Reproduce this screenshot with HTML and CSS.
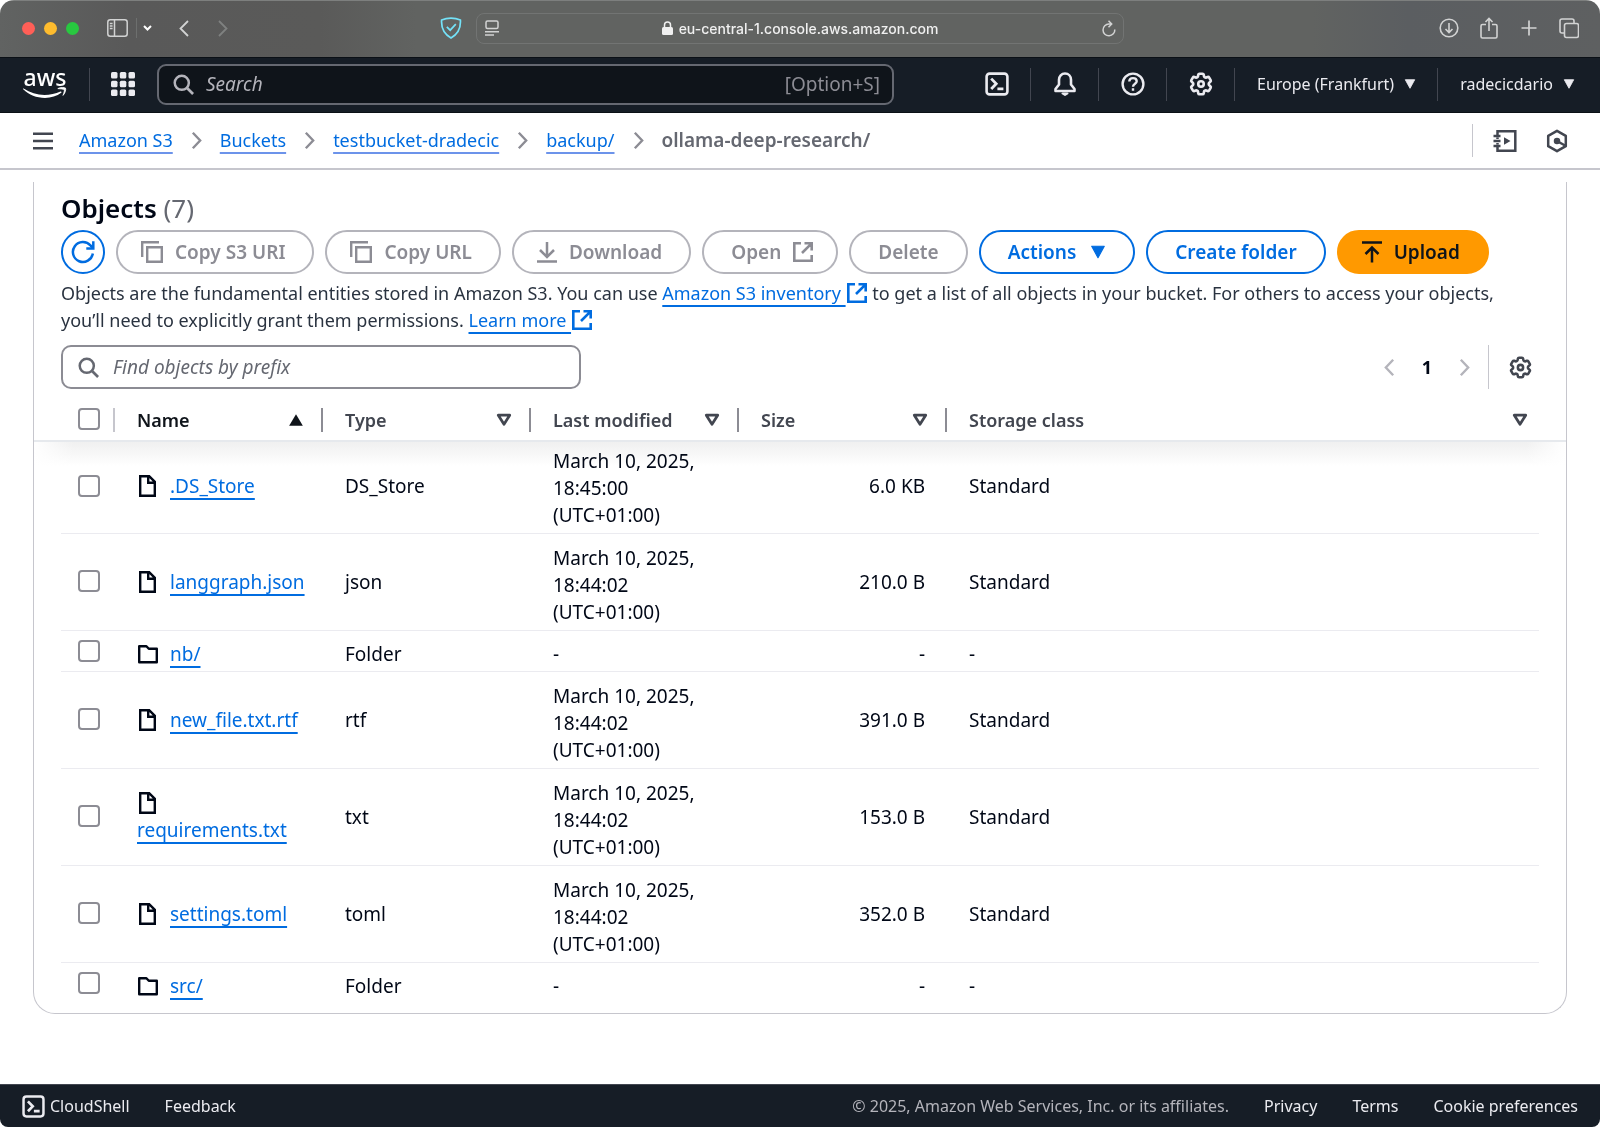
FILE: index.html
```
<!DOCTYPE html>
<html lang="en">
<head>
  <meta charset="UTF-8">
  <meta name="viewport" content="width=device-width, initial-scale=1.0">
  <title>ollama-deep-research/ - S3 bucket</title>
  <link rel="stylesheet" href="styles.css">
</head>
<body>

  <!-- shared icons -->
  <svg class="sprite" aria-hidden="true">
    <symbol id="i-file" viewBox="0 0 22 22">
      <path d="M3.2 1.2h9l5.6 5.6v14H3.2z M11.2 1.5v6.3h6.3" fill="none" stroke="currentColor" stroke-width="2.4"/>
    </symbol>
    <symbol id="i-folder" viewBox="0 0 22 22">
      <path d="M2.2 3.2h7.2l2.4 2.6h8v13.4H2.2z" fill="none" stroke="currentColor" stroke-width="2.4" stroke-linejoin="round"/>
    </symbol>
    <symbol id="i-gear" viewBox="1.5 1.5 21 21">
      <g fill="none" stroke="currentColor" stroke-width="2.3">
        <path d="M9.594 3.94c.09-.542.56-.94 1.11-.94h2.593c.55 0 1.02.398 1.11.94l.213 1.281c.063.374.313.686.645.87.074.04.147.083.22.127.325.196.72.257 1.075.124l1.217-.456a1.125 1.125 0 0 1 1.37.49l1.296 2.247a1.125 1.125 0 0 1-.26 1.431l-1.003.827c-.293.241-.438.613-.43.992a7.723 7.723 0 0 1 0 .255c-.008.378.137.75.43.991l1.004.827c.424.35.534.955.26 1.43l-1.298 2.247a1.125 1.125 0 0 1-1.369.491l-1.217-.456c-.355-.133-.75-.072-1.076.124a6.47 6.47 0 0 1-.22.128c-.331.183-.581.495-.644.869l-.213 1.281c-.09.543-.56.94-1.11.94h-2.594c-.55 0-1.019-.398-1.11-.94l-.213-1.281c-.062-.374-.312-.686-.644-.87a6.52 6.52 0 0 1-.22-.127c-.325-.196-.72-.257-1.076-.124l-1.217.456a1.125 1.125 0 0 1-1.369-.49l-1.297-2.247a1.125 1.125 0 0 1 .26-1.431l1.004-.827c.292-.24.437-.613.43-.991a6.932 6.932 0 0 1 0-.255c.007-.38-.138-.751-.43-.992l-1.004-.827a1.125 1.125 0 0 1-.26-1.43l1.297-2.247a1.125 1.125 0 0 1 1.37-.491l1.216.456c.356.133.751.072 1.076-.124.072-.044.146-.086.22-.128.332-.183.582-.495.644-.869l.214-1.28Z"/>
        <circle cx="12" cy="12" r="2.4"/>
      </g>
    </symbol>
    <symbol id="i-search" viewBox="0 0 22 22">
      <path d="M15 15l6 6" fill="none" stroke="currentColor" stroke-width="2.8"/>
      <circle cx="9.2" cy="9.2" r="7.4" fill="none" stroke="currentColor" stroke-width="2.6"/>
    </symbol>
    <symbol id="i-external" viewBox="0 0 22 22">
      <path d="M9 2.3H2.3v17.4h17.4V14 M12.5 2.3h7.2v7.2 M19.4 2.6L10 12" fill="none" stroke="currentColor" stroke-width="2.6"/>
    </symbol>
    <symbol id="i-copy" viewBox="0 0 24 24">
      <path d="M2.2 17V2.2H19 M7.2 7.2h14.6v14.6H7.2z" fill="none" stroke="currentColor" stroke-width="2.4"/>
    </symbol>
    <symbol id="i-shell" viewBox="0 0 24 24">
      <rect x="1.6" y="1.6" width="20.8" height="20.8" rx="3" fill="none" stroke="currentColor" stroke-width="2.6"/>
      <path d="M6.2 6.6l5 5.2-5 5.2 M12.4 16.8h6" fill="none" stroke="currentColor" stroke-width="2.8"/>
    </symbol>
    <symbol id="i-sort" viewBox="0 0 14 14">
      <path d="M2 2.8h10L7 10.8z" fill="none" stroke="currentColor" stroke-width="2.4" stroke-linejoin="round"/>
    </symbol>
    <symbol id="i-caret" viewBox="0 0 14 14">
      <path d="M1.5 2h11L7 12z" fill="currentColor" stroke="currentColor" stroke-linejoin="round"/>
    </symbol>
    <symbol id="i-chevron" viewBox="0 0 12 20">
      <path d="M2 1.5l8 8.5-8 8.5" fill="none" stroke="currentColor" stroke-width="2.6"/>
    </symbol>
  </svg>

  <div class="window">

    <div class="toolbar">
      <div class="lights"><i class="red"></i><i class="yellow"></i><i class="green"></i></div>
      <button class="tool sidebar-toggle" aria-label="Sidebar">
        <svg width="21" height="18" viewBox="0 0 21 18" fill="none" stroke="currentColor" stroke-width="1.5"><rect x=".8" y=".8" width="19.4" height="16.4" rx="2.5"/><path d="M7.5 1v16M2.8 4.4h2.8M2.8 7h2.8M2.8 9.6h2.8"/></svg>
      </button>
      <button class="tool tab-menu" aria-label="Tab groups">
        <svg width="9" height="6" viewBox="0 0 9 6" fill="none" stroke="currentColor" stroke-width="2"><path d="M1 1l3.5 3.5L8 1"/></svg>
      </button>
      <button class="tool back" aria-label="Back">
        <svg width="10" height="17" viewBox="0 0 10 17" fill="none" stroke="currentColor" stroke-width="1.8"><path d="M9 1L1.5 8.5 9 16"/></svg>
      </button>
      <button class="tool forward" aria-label="Forward" disabled>
        <svg width="10" height="17" viewBox="0 0 10 17" fill="none" stroke="currentColor" stroke-width="1.8"><path d="M1 1l7.5 7.5L1 16"/></svg>
      </button>
      <div class="address-wrap">
        <svg class="shield" width="22" height="22" viewBox="0 0 22 22" fill="none" stroke="currentColor" stroke-width="1.7"><path d="M11 1.2c3.5 0 6.5.6 9.4 1.8.6 8.8-2.9 14.400-9.400 18C4.500 17.400 1 11.800 1.600 3 4.500 1.800 7.500 1.200 11 1.200z"/><path d="M6.800 9.800l3.400 3.400 5.600-6"/></svg>
        <div class="address">
          <svg width="14" height="16" viewBox="0 0 14 16" fill="none" stroke="currentColor" stroke-width="1.5"><rect x="1" y="1" width="12" height="7.5" rx="1.5"/><path d="M0 11.700h14M0 15h9"/></svg>
          <div class="url">
            <svg width="11" height="14" viewBox="0 0 11 14" fill="currentColor"><rect y="6" width="11" height="8" rx="1.5"/><path d="M2.500 6V4a3 3 0 0 1 6 0v2" fill="none" stroke="currentColor" stroke-width="1.5"/></svg>
            <span>eu-central-1.console.aws.amazon.com</span>
          </div>
          <svg width="14" height="17" viewBox="0 0 14 17" fill="none" stroke="currentColor" stroke-width="1.5"><path d="M12.800 9.500A5.900 5.900 0 1 1 7 4h2.500M6.500.8L9.700 4 6.500 7.200"/></svg>
        </div>
      </div>
      <div class="window-actions">
        <button class="tool" aria-label="Downloads"><svg width="20" height="22" viewBox="0 0 20 22" fill="none" stroke="currentColor" stroke-width="1.6"><circle cx="10" cy="11" r="8.8"/><path d="M10 6v9.500M6.500 12l3.500 3.500 3.500-3.500"/></svg></button>
        <button class="tool" aria-label="Share"><svg width="20" height="22" viewBox="0 0 20 22" fill="none" stroke="currentColor" stroke-width="1.6"><path d="M7 7.500H3.500a1.500 1.500 0 0 0-1.500 1.500v10.500A1.500 1.500 0 0 0 3.500 21h13a1.500 1.500 0 0 0 1.500-1.500V9a1.500 1.500 0 0 0-1.500-1.500H13M10 14V1.500M6.500 5L10 1.500 13.500 5"/></svg></button>
        <button class="tool" aria-label="New tab"><svg width="20" height="22" viewBox="0 0 20 22" fill="none" stroke="currentColor" stroke-width="1.7"><path d="M10 3.500v15M2.500 11h15"/></svg></button>
        <button class="tool" aria-label="Tab overview"><svg width="20" height="22" viewBox="0 0 20 22" fill="none" stroke="currentColor" stroke-width="1.6"><rect x="5.500" y="6.500" width="14" height="14" rx="2"/><path d="M5 16H3a2 2 0 0 1-2-2V4a2 2 0 0 1 2-2h10a2 2 0 0 1 2 2v2"/></svg></button>
      </div>
    </div>

    <header class="navbar">
      <a class="logo" href="#" aria-label="AWS home">
        <span>aws</span>
        <svg width="44" height="12" viewBox="0 0 44 12"><path d="M.6 1.600C7 5.800 14 8 21.500 8c5.500 0 11-1.200 16-3.400.8-.3 1.500.6.7 1.200C34 9 28 11 22 11 13.500 11 6 7.800.2 2.300c-.4-.4 0-1 .4-.7z" fill="currentColor"/><path d="M34.800 1.600c2.500-1.500 7-1.300 7.700-.5.700 1-.2 5.200-2.500 7.300 1-2.500 1.600-4.800 1.200-5.600-.5-.9-3.700-.9-6.400-1.200z" fill="currentColor" stroke="currentColor" stroke-width=".8"/></svg>
      </a>
      <button class="apps" aria-label="Services">
        <svg width="24" height="24" viewBox="0 0 24 24" fill="currentColor"><rect x="0" y="0" width="6.5" height="6.5" rx="1.5"/><rect x="8.8" y="0" width="6.5" height="6.5" rx="1.5"/><rect x="17.5" y="0" width="6.5" height="6.5" rx="1.5"/><rect x="0" y="8.8" width="6.5" height="6.5" rx="1.5"/><rect x="8.8" y="8.8" width="6.5" height="6.5" rx="1.5"/><rect x="17.5" y="8.8" width="6.5" height="6.5" rx="1.5"/><rect x="0" y="17.5" width="6.5" height="6.5" rx="1.5"/><rect x="8.8" y="17.5" width="6.5" height="6.5" rx="1.5"/><rect x="17.5" y="17.5" width="6.5" height="6.5" rx="1.5"/></svg>
      </button>
      <label class="nav-search">
        <svg width="21" height="21"><use href="#i-search"/></svg>
        <input type="text" placeholder="Search" aria-label="Search">
        <span>[Option+S]</span>
      </label>
      <nav class="nav-items">
        <button aria-label="CloudShell"><svg width="24" height="24"><use href="#i-shell"/></svg></button>
        <button aria-label="Notifications"><svg width="24" height="24" viewBox="0 0 24 24" fill="none" stroke="currentColor" stroke-width="2.6" stroke-linejoin="round"><path d="M12 1.500c-3.500 0-6 2.700-6 6.300v4.700L2.500 17v2h19v-2L18 12.500V7.800c0-3.600-2.500-6.300-6-6.300z"/><path d="M9.500 21.500h5L12 23z" stroke-width="2"/></svg></button>
        <button aria-label="Help"><svg width="24" height="24" viewBox="0 0 24 24" fill="none" stroke="currentColor" stroke-width="2.4"><circle cx="12" cy="12" r="10.4"/><path d="M8.300 9.600c0-2.200 1.600-3.500 3.700-3.500s3.700 1.300 3.700 3.200c0 2.400-3.700 2.600-3.700 5.500M12 16.300v2.500"/></svg></button>
        <button aria-label="Settings"><svg width="24" height="24"><use href="#i-gear"/></svg></button>
        <button>Europe (Frankfurt) <svg width="12" height="12"><use href="#i-caret"/></svg></button>
        <button>radecicdario <svg width="12" height="12"><use href="#i-caret"/></svg></button>
      </nav>
    </header>

    <div class="crumb-bar">
      <button class="menu" aria-label="Open navigation">
        <svg width="20" height="18" viewBox="0 0 20 18" stroke="currentColor" stroke-width="2.4"><path d="M0 1.800h20M0 9h20M0 16.200h20"/></svg>
      </button>
      <nav class="crumbs" aria-label="Breadcrumbs">
        <a href="#">Amazon S3</a>
        <svg width="11" height="19"><use href="#i-chevron"/></svg>
        <a href="#">Buckets</a>
        <svg width="11" height="19"><use href="#i-chevron"/></svg>
        <a href="#">testbucket-dradecic</a>
        <svg width="11" height="19"><use href="#i-chevron"/></svg>
        <a href="#">backup/</a>
        <svg width="11" height="19"><use href="#i-chevron"/></svg>
        <span>ollama-deep-research/</span>
      </nav>
      <div class="crumb-tools">
        <button aria-label="Tutorials"><svg width="24" height="24" viewBox="0 0 24 24" fill="none" stroke="currentColor" stroke-width="2.5"><path d="M4.500 6V2.200h17.800v19.600H4.500V18M4.500 8.500v1.500M4.500 14v1.500M.5 7h7M.5 12h7M.5 17h7"/><path d="M11 8.200v7.600l6.500-3.800z" fill="currentColor" stroke="none"/></svg></button>
        <button aria-label="Diagnostics"><svg width="24" height="24" viewBox="0 0 24 24" fill="none" stroke="currentColor" stroke-width="2.5" stroke-linejoin="round"><path d="M12 1.800l8.800 5v10.400l-8.800 5-8.800-5V6.800z"/><path d="M12 12l8 4.500"/><circle cx="12" cy="12" r="2" fill="currentColor"/></svg></button>
      </div>
    </div>

    <main>
      <section class="card">
        <h1>Objects <span>(7)</span></h1>

        <div class="actions">
          <button class="btn round" aria-label="Refresh">
            <svg width="24" height="24" viewBox="0 0 24 24" fill="none" stroke="currentColor" stroke-width="2.5"><path d="M21.800 13.500A10 10 0 1 1 19.500 5.500L22 8"/><path d="M22.300 1.200v7.300h-7"/></svg>
          </button>
          <button class="btn icon-left" disabled><svg width="24" height="24"><use href="#i-copy"/></svg>Copy S3 URI</button>
          <button class="btn icon-left" disabled><svg width="24" height="24"><use href="#i-copy"/></svg>Copy URL</button>
          <button class="btn icon-left" disabled>
            <svg width="22" height="22" viewBox="0 0 22 22" fill="none" stroke="currentColor" stroke-width="2.5"><path d="M1 20.500h20M11 1v14.500M4 9l7 7 7-7"/></svg>Download
          </button>
          <button class="btn icon-right" disabled>Open<svg width="22" height="22"><use href="#i-external"/></svg></button>
          <button class="btn" disabled>Delete</button>
          <button class="btn">Actions<svg class="caret" width="16" height="16"><use href="#i-caret"/></svg></button>
          <button class="btn">Create folder</button>
          <button class="btn primary icon-left">
            <svg width="22" height="22" viewBox="0 0 22 22" fill="none" stroke="currentColor" stroke-width="2.5"><path d="M1 1.500h20M11 21.500V6.500M4.500 13L11 6.500l6.500 6.500"/></svg>Upload
          </button>
        </div>

        <p class="description">
          Objects are the fundamental entities stored in Amazon S3. You can use
          <a href="#">Amazon S3 inventory <svg width="22" height="22"><use href="#i-external"/></svg></a>
          to get a list of all objects in your bucket. For others to access your objects, you’ll need to explicitly grant them permissions.
          <a href="#">Learn more <svg width="22" height="22"><use href="#i-external"/></svg></a>
        </p>

        <div class="filter-row">
          <label class="filter">
            <svg width="21" height="21"><use href="#i-search"/></svg>
            <input type="text" placeholder="Find objects by prefix" aria-label="Find objects by prefix">
          </label>
          <div class="pager">
            <button class="prev" aria-label="Previous page" disabled><svg width="11" height="19"><use href="#i-chevron"/></svg></button>
            <button class="current">1</button>
            <button aria-label="Next page" disabled><svg width="11" height="19"><use href="#i-chevron"/></svg></button>
          </div>
          <button class="prefs" aria-label="Preferences"><svg width="23" height="23"><use href="#i-gear"/></svg></button>
        </div>

        <table>
          <colgroup>
            <col class="col-check"><col class="col"><col class="col"><col class="col"><col class="col"><col>
          </colgroup>
          <thead>
            <tr>
              <th><div class="head check"><input type="checkbox" aria-label="Select all"></div></th>
              <th><div class="head sorted">Name <svg width="16" height="16" viewBox="0 0 14 14"><path d="M1 12h12L7 2z" fill="currentColor"/></svg></div></th>
              <th><div class="head">Type <svg width="16" height="16"><use href="#i-sort"/></svg></div></th>
              <th><div class="head">Last modified <svg width="16" height="16"><use href="#i-sort"/></svg></div></th>
              <th><div class="head">Size <svg width="16" height="16"><use href="#i-sort"/></svg></div></th>
              <th><div class="head last">Storage class <svg width="16" height="16"><use href="#i-sort"/></svg></div></th>
            </tr>
          </thead>
          <tbody>
            <tr>
              <td class="check"><input type="checkbox" aria-label="Select .DS_Store"></td>
              <td class="name"><svg width="22" height="22"><use href="#i-file"/></svg><a href="#">.DS_Store</a></td>
              <td>DS_Store</td>
              <td class="date">March 10, 2025, 18:45:00 (UTC+01:00)</td>
              <td class="size">6.0 KB</td>
              <td>Standard</td>
            </tr>
            <tr>
              <td class="check"><input type="checkbox" aria-label="Select langgraph.json"></td>
              <td class="name"><svg width="22" height="22"><use href="#i-file"/></svg><a href="#">langgraph.json</a></td>
              <td>json</td>
              <td class="date">March 10, 2025, 18:44:02 (UTC+01:00)</td>
              <td class="size">210.0 B</td>
              <td>Standard</td>
            </tr>
            <tr class="folder">
              <td class="check"><input type="checkbox" aria-label="Select nb/"></td>
              <td class="name"><svg width="22" height="22"><use href="#i-folder"/></svg><a href="#">nb/</a></td>
              <td>Folder</td>
              <td>-</td>
              <td class="size">-</td>
              <td>-</td>
            </tr>
            <tr>
              <td class="check"><input type="checkbox" aria-label="Select new_file.txt.rtf"></td>
              <td class="name"><svg width="22" height="22"><use href="#i-file"/></svg><a href="#">new_file.txt.rtf</a></td>
              <td>rtf</td>
              <td class="date">March 10, 2025, 18:44:02 (UTC+01:00)</td>
              <td class="size">391.0 B</td>
              <td>Standard</td>
            </tr>
            <tr>
              <td class="check"><input type="checkbox" aria-label="Select requirements.txt"></td>
              <td class="name"><svg width="22" height="22"><use href="#i-file"/></svg><br><a href="#">requirements.txt</a></td>
              <td>txt</td>
              <td class="date">March 10, 2025, 18:44:02 (UTC+01:00)</td>
              <td class="size">153.0 B</td>
              <td>Standard</td>
            </tr>
            <tr>
              <td class="check"><input type="checkbox" aria-label="Select settings.toml"></td>
              <td class="name"><svg width="22" height="22"><use href="#i-file"/></svg><a href="#">settings.toml</a></td>
              <td>toml</td>
              <td class="date">March 10, 2025, 18:44:02 (UTC+01:00)</td>
              <td class="size">352.0 B</td>
              <td>Standard</td>
            </tr>
            <tr class="folder">
              <td class="check"><input type="checkbox" aria-label="Select src/"></td>
              <td class="name"><svg width="22" height="22"><use href="#i-folder"/></svg><a href="#">src/</a></td>
              <td>Folder</td>
              <td>-</td>
              <td class="size">-</td>
              <td>-</td>
            </tr>
          </tbody>
        </table>
      </section>
    </main>

    <footer>
      <a class="shell" href="#"><svg width="23" height="23"><use href="#i-shell"/></svg>CloudShell</a>
      <a href="#">Feedback</a>
      <span class="copyright">© 2025, Amazon Web Services, Inc. or its affiliates.</span>
      <a href="#">Privacy</a>
      <a href="#">Terms</a>
      <a href="#">Cookie preferences</a>
    </footer>

  </div>

</body>
</html>
```

FILE: styles.css
```
* {
  box-sizing: border-box;
}

body {
  margin: 0;
  background-color: white;
  color: #000716;
  font-family: "Noto Sans", "Open Sans", sans-serif;
  font-size: 18px;
  line-height: 27px;
}

button {
  display: flex;
  align-items: center;
  padding: 0;
  border: 0;
  background: none;
  color: inherit;
  font: inherit;
  white-space: nowrap;
}

input {
  font: inherit;
  color: inherit;
}

svg {
  flex: none;
}

a {
  color: #006ce0;
  text-decoration: underline;
  text-decoration-thickness: 2px;
  text-underline-offset: 5px;
  text-decoration-skip-ink: none;
}

.sprite {
  position: absolute;
  width: 0;
  height: 0;
}

.window {
  display: flex;
  flex-direction: column;
  min-height: 100vh;
  overflow: hidden;
  border-radius: 14px 14px 8px 8px;
}

/* browser toolbar */

.toolbar {
  display: flex;
  align-items: center;
  height: 57px;
  padding: 0 21px 2px 22px;
  border-top: 1px solid #7d7f7e;
  background: linear-gradient(90deg, #616362 0%, #595959 8%, #5a5a59 20%, #616361 26%, #616361 82%, #5b5e61 88%, #5e6061 100%);
  color: #d2d3d3;
}

.lights {
  display: flex;
  gap: 9px;
}

.lights i {
  width: 13px;
  height: 13px;
  border-radius: 50%;
}

.red {
  background-color: #ff5f57;
}
.yellow {
  background-color: #febc2e;
}
.green {
  background-color: #28c840;
}

.sidebar-toggle {
  margin-left: 28px;
}

.tab-menu {
  height: 20px;
  margin-left: 8px;
  padding-left: 6px;
  border-left: 1px solid #6d6f6e;
  color: white;
}

.back {
  margin-left: 27px;
}

.forward {
  margin-left: 29px;
  color: #7f8180;
}

.address-wrap {
  display: flex;
  flex: 1;
  align-items: center;
  justify-content: center;
  gap: 14px;
  padding-right: 104px;
}

.shield {
  color: #74e2f8;
}

.address {
  display: flex;
  align-items: center;
  flex: 0 1 648px;
  height: 31px;
  padding: 0 7px 0 8px;
  border: 1px solid #727473;
  border-radius: 8px;
}

.url {
  display: flex;
  flex: 1;
  align-items: center;
  justify-content: center;
  gap: 6px;
  color: #f0f0f0;
  font-family: Inter, sans-serif;
  font-size: 14px;
  font-weight: 500;
}

.window-actions {
  display: flex;
  gap: 20px;
}

/* console navigation */

.navbar {
  display: flex;
  align-items: center;
  height: 56px;
  padding: 0 25px 2px 23px;
  border-top: 1px solid #0b1016;
  border-bottom: 1px solid #0b1016;
  background-color: #161d26;
  color: #ebebf0;
  font-size: 16px;
}

.logo {
  display: flex;
  flex-direction: column;
  gap: 3px;
  color: white;
  text-decoration: none;
}

.logo span {
  font-size: 23px;
  font-weight: 500;
  line-height: 14px;
  text-align: center;
}

.apps {
  height: 33px;
  margin: 0 22px 0 22px;
  padding-left: 21px;
  border-left: 1px solid #424650;
}

.nav-search {
  display: flex;
  flex: 0 1 737px;
  align-items: center;
  gap: 12px;
  height: 41px;
  padding: 0 12px 0 14px;
  border: 2px solid #656871;
  border-radius: 9px;
  background-color: #0f141a;
  color: #b4b4bb;
  font-size: 19px;
}

.nav-search input,
.filter input {
  flex: 1;
  min-width: 0;
  padding: 0;
  border: 0;
  outline: 0;
  background: none;
}

input::placeholder {
  color: inherit;
  font-style: italic;
  opacity: 1;
}

.nav-search span {
  color: #8c8c94;
}

.nav-items {
  display: flex;
  margin-left: auto;
}

.nav-items button {
  gap: 10px;
  height: 33px;
  padding: 0 21px 0 22px;
  border-left: 1px solid #424650;
}

.nav-items button:first-child {
  border-left: 0;
}

.nav-items button:last-child {
  padding-right: 0;
}

.crumb-bar {
  display: flex;
  align-items: center;
  height: 57px;
  padding: 0 31px 0 33px;
  border-bottom: 2px solid #c6c6cd;
  color: #424650;
}

.crumbs {
  display: flex;
  align-items: center;
  gap: 18px;
  margin-left: 26px;
}

.crumbs svg {
  color: #8c8c94;
}

.crumbs a {
  text-decoration-color: #6c93ea;
}

.crumbs span {
  color: #656871;
  font-size: 19px;
  font-weight: 600;
}

.crumb-tools {
  display: flex;
  gap: 28px;
  height: 33px;
  margin-left: auto;
  padding-left: 20px;
  border-left: 1px solid #c6c6cd;
}

/* objects panel */

main {
  flex: 1;
  padding: 12px 33px 40px;
}

.card {
  padding: 11px 27px 10px;
  border: 1px solid #c6c6cd;
  border-top: 0;
  border-radius: 0 0 22px 22px;
}

h1 {
  margin: 0 0 7px;
  font-size: 26px;
  font-weight: 600;
  line-height: 30px;
}

h1 span {
  color: #656871;
  font-weight: 400;
}

.actions {
  display: flex;
  flex-wrap: wrap;
  gap: 11px;
}

.btn {
  gap: 11px;
  height: 44px;
  padding: 0 27px;
  border: 2px solid #006ce0;
  border-radius: 22px;
  color: #006ce0;
  font-size: 19px;
  font-weight: 600;
}

.btn:disabled {
  border-color: #b4b4bb;
  color: #8c8c94;
}

.icon-left {
  padding-left: 22px;
}

.icon-right {
  padding-right: 22px;
}

.round {
  justify-content: center;
  width: 44px;
  padding: 0;
}

.caret {
  margin-left: 3px;
}

.primary {
  border-color: #ff9900;
  background-color: #ff9900;
  color: #0f141a;
}

.description {
  margin: 6px 0 11px;
  color: #2a3340;
}

.description svg {
  vertical-align: -4px;
}

.filter-row {
  display: flex;
  align-items: center;
}

.filter {
  display: flex;
  flex: 0 1 520px;
  align-items: center;
  gap: 14px;
  height: 44px;
  padding: 0 15px;
  border: 2px solid #8c8c94;
  border-radius: 10px;
  color: #656871;
  font-size: 19px;
}

.pager {
  display: flex;
  gap: 27px;
  margin-left: auto;
}

.pager button:disabled {
  color: #b4b4bb;
}

.current {
  font-weight: 700;
}

.prev svg {
  transform: scaleX(-1);
}

.prefs {
  height: 44px;
  margin-left: 18px;
  padding: 0 7px 0 20px;
  border-left: 1px solid #c6c6cd;
  color: #424650;
}

table {
  width: 100%;
  margin-top: 12px;
  border-collapse: separate;
  border-spacing: 0;
  table-layout: fixed;
}

.col-check {
  width: 54px;
}

.col {
  width: 208px;
}

thead {
  position: relative;
}

/* shadow under the stuck header, reaches the card's edges */
thead::after {
  content: "";
  position: absolute;
  top: 100%;
  right: -27px;
  left: -27px;
  height: 24px;
  margin-top: -2px;
  border-top: 2px solid #e6e9ed;
  background: linear-gradient(90deg, white, transparent 40px, transparent calc(100% - 40px), white), linear-gradient(#f0f0f0, white);
  mix-blend-mode: multiply;
  pointer-events: none;
}

th {
  height: 41px;
  padding: 0 0 3px;
  font-weight: 600;
  text-align: left;
}

.head {
  display: flex;
  align-items: center;
  justify-content: space-between;
  height: 24px;
  padding: 0 17px 0 22px;
  border-right: 2px solid #8c8c94;
  color: #424650;
}

.head.check {
  padding: 0 0 3px 17px;
  border-color: #c6c6cd;
}

.head.sorted {
  color: #0f141a;
}

.head.last {
  padding-right: 11px;
  border-right: 0;
}

td {
  padding: 8px 22px;
  border-bottom: 1px solid #ebebf0;
  font-size: 19px;
}

.date {
  padding-top: 11px;
  padding-bottom: 4px;
}

td.check {
  padding: 6px 0 8px 17px;
}

.folder td {
  padding-top: 10px;
  padding-bottom: 3px;
}

.folder td.check {
  padding-top: 6px;
  padding-bottom: 7px;
}

tbody tr:first-child td {
  padding-top: 5px;
  padding-bottom: 8px;
}

tbody tr:first-child .date {
  padding-top: 6px;
  padding-bottom: 4px;
}

tbody tr:last-child td {
  border-bottom: 0;
}

td.name {
  padding-right: 0;
  white-space: nowrap;
}

.name svg {
  margin-right: 11px;
  vertical-align: -4px;
}

.size {
  text-align: right;
}

input[type="checkbox"] {
  display: block;
  width: 22px;
  height: 22px;
  margin: 0;
  border: 2px solid #8c8c94;
  border-radius: 4px;
  background-color: white;
  appearance: none;
}

footer {
  display: flex;
  align-items: center;
  gap: 35px;
  height: 43px;
  padding: 0 22px;
  border-top: 1px solid #424650;
  background-color: #161d26;
  font-size: 16px;
}

footer a {
  color: #ebebf0;
  text-decoration: none;
}

.shell {
  display: flex;
  align-items: center;
  gap: 5px;
}

.copyright {
  margin-left: auto;
  color: #b4b4bb;
}
```
